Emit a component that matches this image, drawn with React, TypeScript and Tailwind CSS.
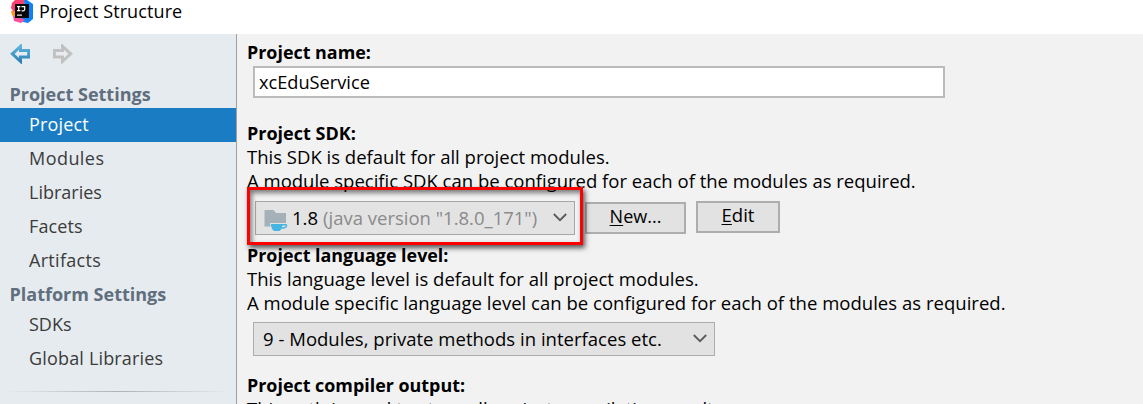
import React from "react";

const SANS = "font-['Open_Sans','Noto_Sans_CJK_SC',sans-serif]";

function IdeaLogo() {
  return (
    <svg width="23" height="24" viewBox="0 0 23 24" className="block shrink-0">
      <polygon points="0,11 5,11 6,20 1,15" fill="#ff9426" />
      <polygon points="1,3 4,0 14,0 12,12 2,11 0,8" fill="#fb3f70" />
      <polygon points="13,0 16,0 22,4 22,19 17,23 12,22 8,19 14,14" fill="#0f83f5" />
      <polygon points="2,16 8,17 14,20 10,23 3,21" fill="#f8519c" />
      <rect x="4" y="4" width="14" height="14" fill="#070707" />
      <path d="M6 6.6h3.4M7.7 6.6v4M6 10.6h3.4M10.5 6.6h3.200v3q0 1.200-1.400 1.200h-1.700" stroke="#fff" strokeWidth="1.200" fill="none" />
      <rect x="6" y="14.500" width="5" height="1.300" fill="#ddd" />
    </svg>
  );
}

function BackArrow() {
  return (
    <svg width="20" height="20" viewBox="0 0 20 20" className="block">
      <defs>
        <linearGradient id="back" x1="0" y1="0" x2="0" y2="1">
          <stop offset="0" stopColor="#5db4dc" />
          <stop offset="1" stopColor="#2f82b8" />
        </linearGradient>
      </defs>
      <path d="M2.300 9.800 L10.500 2.300 V6.600 H18.700 V13 H10.500 V17.300 Z" fill="none" stroke="url(#back)" strokeWidth="3" />
    </svg>
  );
}

function ForwardArrow() {
  return (
    <svg width="20" height="20" viewBox="0 0 20 20" className="block">
      <path d="M17.700 9.800 L9.500 2.300 V6.600 H1.300 V13 H9.500 V17.300 Z" fill="none" stroke="#c1c1c1" strokeWidth="3" />
    </svg>
  );
}

function Chevron() {
  return (
    <svg width="14" height="9" viewBox="0 0 14 9" className="block">
      <path d="M0.800 1 L7 7.200 L13.200 1" fill="none" stroke="#5a5a5a" strokeWidth="1.800" />
    </svg>
  );
}

function JdkIcon() {
  return (
    <svg width="24" height="23" viewBox="0 0 24 23" className="block">
      <path d="M0.500 1H9.500L12 4H22V17.500H0.500Z" fill="#a5b1b9" />
      <path d="M6 14H24V19H18.500Q16.500 22 12.500 22Q6 21 6 14Z" fill="#e3e3e3" />
      <path d="M7 15H18.500V16.500Q18 20.500 15.500 22H10Q7.500 20.500 7 16.500Z" fill="#45b5e2" />
      <path d="M18 15.700H21.800Q22.800 15.700 22.400 17.200Q21.800 19 17 19" fill="none" stroke="#45b5e2" strokeWidth="1.400" />
    </svg>
  );
}

const settings = [
  { label: "Project", spacing: "tracking-[0.15px]" },
  { label: "Modules", spacing: "tracking-[0.45px]" },
  { label: "Libraries", spacing: "tracking-[0px]" },
  { label: "Facets", spacing: "tracking-[0.1px]" },
  { label: "Artifacts", spacing: "tracking-[0.3px]" },
];

function Sidebar() {
  return (
    <aside className="h-[370px] w-[237px] shrink-0 border-r border-[#a0a0a0] bg-[#e6ebef] text-[18px] text-[#3b3b3b]">
      <div className="flex h-[47px] gap-[23px] pt-[10px] pl-[10px]">
        <BackArrow />
        <ForwardArrow />
      </div>
      <h2 className="h-[27px] pl-[9.5px] leading-[26px] font-bold text-[#606e7d]">Project Settings</h2>
      <ul>
        {settings.map((item, i) => (
          <li
            key={item.label}
            className={`h-[34px] pl-[29px] leading-[33px] ${item.spacing} ${i === 0 ? "bg-[#1a7dc4] text-white" : ""}`}
          >
            {item.label}
          </li>
        ))}
      </ul>
      <h2 className="h-[34px] pl-[9.5px] leading-[33px] font-bold text-[#606e7d]">Platform Settings</h2>
      <ul>
        <li className="h-[34px] pl-[29px] leading-[25px]">SDKs</li>
        <li className="h-[34px] pl-[29px] leading-[25px] tracking-[0.17px]">Global Libraries</li>
      </ul>
      <div className="mx-[6px] mt-[11px] h-px bg-linear-to-r from-transparent via-[#aeb3b6] to-transparent" />
    </aside>
  );
}

export default function App() {
  return (
    <div className={`h-[404px] w-[1143px] overflow-hidden bg-[#f2f2f2] text-[18.5px] leading-[24px] whitespace-nowrap text-black ${SANS}`}>
      <header className="flex h-[34px] gap-[5px] bg-white pl-[11px]">
        <IdeaLogo />
        <span className="text-[18px] leading-[23px] tracking-[0.1px]">Project Structure</span>
      </header>
      <div className="flex">
        <Sidebar />
        <main className="flex-1 pt-[6px] pl-[10px]">
          <h3 className="h-[26px] text-[17.9px] font-bold">Project name:</h3>
          <div className="ml-[6px] h-[32px] w-[692px] border-2 border-[#bbbbbb] bg-white pl-[4px] text-[18.2px] leading-[28px]">xcEduService</div>
          <h3 className="mt-[23px] text-[18px] font-bold">Project SDK:</h3>
          <p>This SDK is default for all project modules.</p>
          <p>A module specific SDK can be configured for each of the modules as required.</p>
          <div className="relative mt-px flex h-[49px] items-start">
            <div className="mt-[7px] ml-[8px] flex h-[34px] w-[320px] items-start border border-[#a6a6a6] bg-[#e3e3e3] pt-[3px] pl-[8px]">
              <div className="pt-[4px]"><JdkIcon /></div>
              <span className="ml-[4px] leading-[25px]">1.8</span>
              <span className="ml-[5px] leading-[25px] text-[#8a8a8a]">(java version "1.8.0_171")</span>
              <div className="mt-[8px] mr-[7px] ml-auto"><Chevron /></div>
            </div>
            <button className="mt-[8px] ml-[10px] h-[32px] w-[101px] border-2 border-[#adadad] bg-[#e2e2e2] pb-[4px] text-[18px] leading-[24px]">
              <u className="underline-offset-2">N</u>ew...
            </button>
            <button className="mt-[7px] ml-[10px] h-[32px] w-[84px] border-2 border-[#adadad] bg-[#e2e2e2] pb-[4px] leading-[24px]">
              <u className="underline-offset-2">E</u>dit
            </button>
            <div className="absolute -top-[7px] left-0 h-[58px] w-[336px] border-3 border-[#fe0000] shadow-[2px_3px_5px_rgba(0,0,0,0.65),inset_2px_3px_5px_rgba(0,0,0,0.5)]" />
          </div>
          <h3 className="text-[17.9px] font-bold">Project language level:</h3>
          <p className="tracking-[0.025px]">This language level is default for all project modules.</p>
          <p className="tracking-[0.025px]">A module specific language level can be configured for each of the modules as required.</p>
          <div className="mt-[7px] ml-[6px] flex h-[34px] w-[462px] justify-between border border-[#adadad] bg-[#e2e2e2] pr-[7px] pl-[9px] leading-[32px]">
            <span className="tracking-[0.02px]">9 - Modules, private methods in interfaces etc.</span>
            <div className="pt-[11px]"><Chevron /></div>
          </div>
          <h3 className="mt-[17px] text-[17.9px] font-bold">Project compiler output:</h3>
          <p>This path is used to store all project compilation results.</p>
        </main>
      </div>
    </div>
  );
}
